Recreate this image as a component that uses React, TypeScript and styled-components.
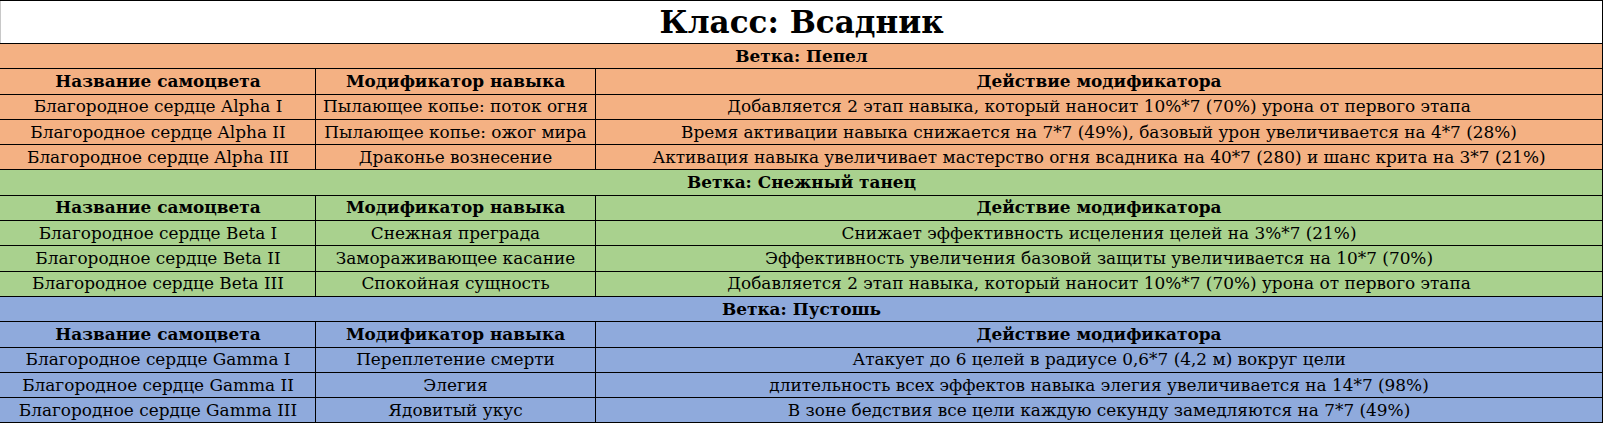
import React from "react";
import styled, { createGlobalStyle } from "styled-components";

const GlobalStyle = createGlobalStyle`
  html, body {
    margin: 0;
    padding: 0;
    background: #ffffff;
  }
  body {
    font-family: "DejaVu Serif", "Liberation Serif", serif;
    color: #000000;
  }
`;

const Sheet = styled.div`
  width: 1602px;
  border-right: 1px solid #d4d4d4;
`;

const Table = styled.table`
  width: 1602px;
  border-collapse: collapse;
  table-layout: fixed;
  border-left: 1px solid #c8c8c8;
`;

const Row = styled.tr<{ $h?: number }>`
  height: ${(p) => p.$h ?? 25.3}px;
`;

const palette = {
  ash: "#f4b183",
  snow: "#a9d18e",
  waste: "#8faadc",
};

type Tone = keyof typeof palette;

const Cell = styled.td<{ $tone: Tone }>`
  background: ${(p) => palette[p.$tone]};
  border: 1px solid #000000;
  border-left-color: ${(p) => palette[p.$tone]};
  padding: 0 4px;
  text-align: center;
  vertical-align: middle;
  font-size: 16.9px;
  line-height: 1;
  white-space: nowrap;
  overflow: hidden;
  &:not(:first-child) {
    border-left-color: #000000;
  }
`;

const HeadCell = styled(Cell).attrs({ as: "th" })`
  font-weight: bold;
`;

const SectionCell = styled(Cell)`
  font-weight: bold;
`;

const TitleCell = styled.td`
  background: #ffffff;
  border-top: 1px solid #000000;
  border-right: 1px solid #000000;
  border-bottom: 1px solid #000000;
  text-align: center;
  font-weight: bold;
  font-size: 31px;
  line-height: 1;
  padding: 0;
`;

type Gem = { gem: string; skill: string; effect: string };
type Branch = { tone: Tone; name: string; gems: Gem[] };

const branches: Branch[] = [
  {
    tone: "ash",
    name: "Ветка: Пепел",
    gems: [
      {
        gem: "Благородное сердце Alpha I",
        skill: "Пылающее копье: поток огня",
        effect:
          "Добавляется 2 этап навыка, который наносит 10%*7 (70%) урона от первого этапа",
      },
      {
        gem: "Благородное сердце Alpha II",
        skill: "Пылающее копье: ожог мира",
        effect:
          "Время активации навыка снижается на 7*7 (49%), базовый урон увеличивается на 4*7 (28%)",
      },
      {
        gem: "Благородное сердце Alpha III",
        skill: "Драконье вознесение",
        effect:
          "Активация навыка увеличивает мастерство огня всадника на 40*7 (280) и шанс крита на 3*7 (21%)",
      },
    ],
  },
  {
    tone: "snow",
    name: "Ветка: Снежный танец",
    gems: [
      {
        gem: "Благородное сердце Beta I",
        skill: "Снежная преграда",
        effect: "Снижает эффективность исцеления целей на 3%*7 (21%)",
      },
      {
        gem: "Благородное сердце Beta II",
        skill: "Замораживающее касание",
        effect: "Эффективность увеличения базовой защиты увеличивается на 10*7 (70%)",
      },
      {
        gem: "Благородное сердце Beta III",
        skill: "Спокойная сущность",
        effect:
          "Добавляется 2 этап навыка, который наносит 10%*7 (70%) урона от первого этапа",
      },
    ],
  },
  {
    tone: "waste",
    name: "Ветка: Пустошь",
    gems: [
      {
        gem: "Благородное сердце Gamma I",
        skill: "Переплетение смерти",
        effect: "Атакует до 6 целей в радиусе 0,6*7 (4,2 м) вокруг цели",
      },
      {
        gem: "Благородное сердце Gamma II",
        skill: "Элегия",
        effect: "длительность всех эффектов навыка элегия увеличивается на 14*7 (98%)",
      },
      {
        gem: "Благородное сердце Gamma III",
        skill: "Ядовитый укус",
        effect: "В зоне бедствия все цели каждую секунду замедляются на 7*7 (49%)",
      },
    ],
  },
];

const BranchRows: React.FC<{ branch: Branch }> = ({ branch }) => (
  <>
    <Row>
      <SectionCell $tone={branch.tone} colSpan={3}>
        {branch.name}
      </SectionCell>
    </Row>
    <Row>
      <HeadCell $tone={branch.tone}>Название самоцвета</HeadCell>
      <HeadCell $tone={branch.tone}>Модификатор навыка</HeadCell>
      <HeadCell $tone={branch.tone}>Действие модификатора</HeadCell>
    </Row>
    {branch.gems.map((g) => (
      <Row key={g.gem}>
        <Cell $tone={branch.tone}>{g.gem}</Cell>
        <Cell $tone={branch.tone}>{g.skill}</Cell>
        <Cell $tone={branch.tone}>{g.effect}</Cell>
      </Row>
    ))}
  </>
);

const App: React.FC = () => (
  <>
    <GlobalStyle />
    <Sheet>
      <Table>
        <colgroup>
          <col style={{ width: 315 }} />
          <col style={{ width: 280 }} />
          <col style={{ width: 1007 }} />
        </colgroup>
        <tbody>
          <Row $h={43}>
            <TitleCell colSpan={3}>Класс: Всадник</TitleCell>
          </Row>
          {branches.map((b) => (
            <BranchRows key={b.name} branch={b} />
          ))}
        </tbody>
      </Table>
    </Sheet>
  </>
);

export default App;
